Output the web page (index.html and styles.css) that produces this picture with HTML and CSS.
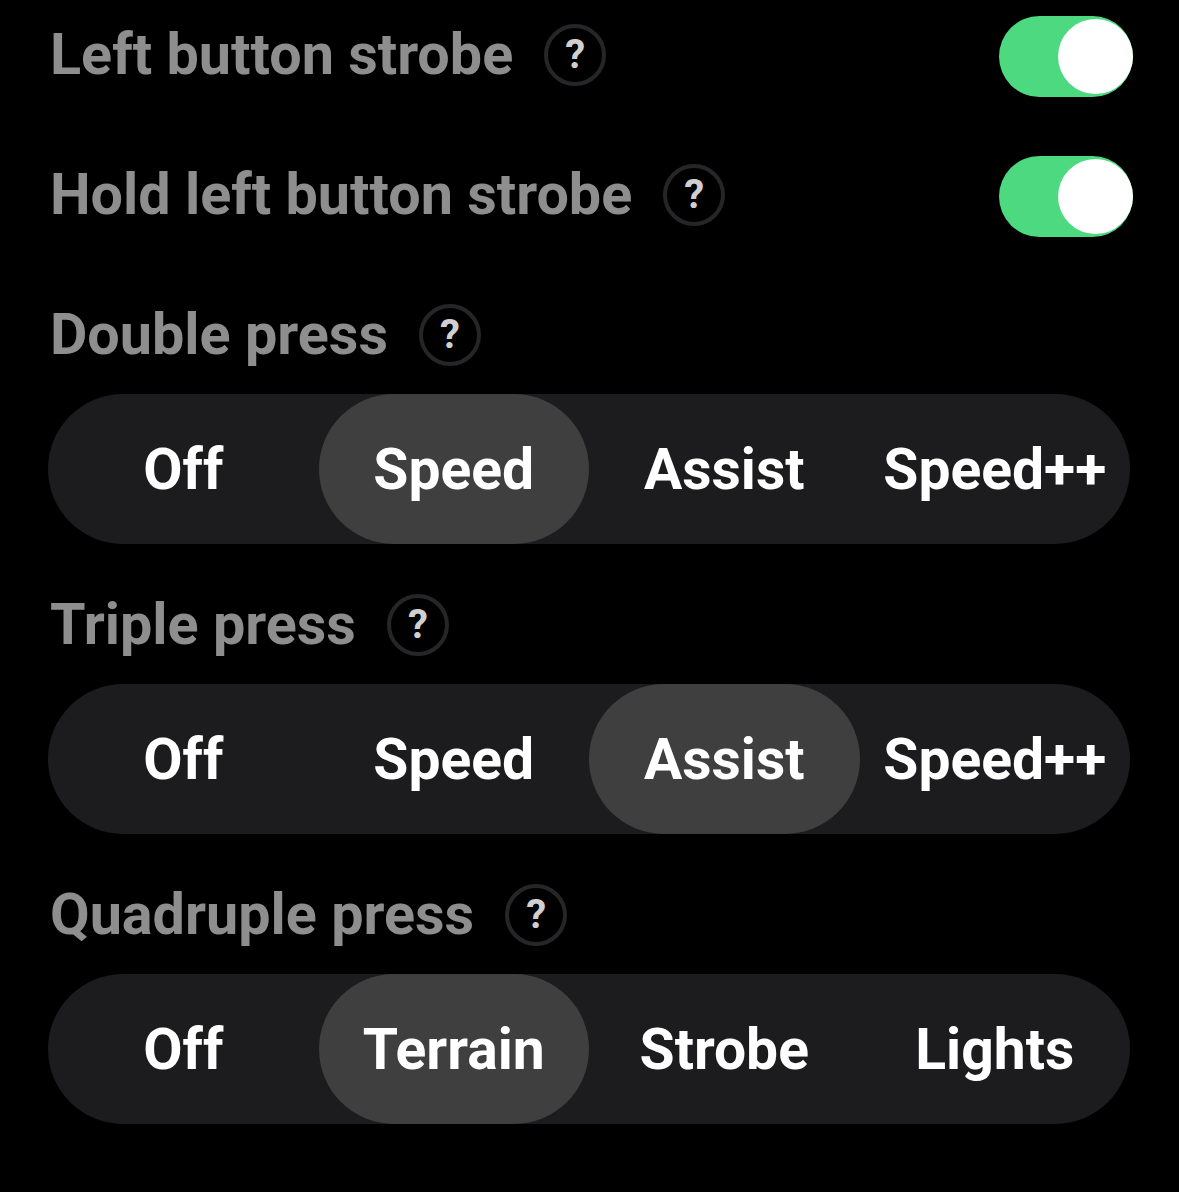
FILE: index.html
```html
<!DOCTYPE html>
<html lang="en">
<head>
    <meta charset="UTF-8">
    <meta name="viewport" content="width=device-width, initial-scale=1.0">
    <title>Button Settings</title>
    <link rel="stylesheet" href="styles.css">
</head>
<body>
    <div class="settings">
        <div class="row toggle-row">
            <div class="label">Left button strobe <span class="help">?</span></div>
            <div class="switch on"><span class="knob"></span></div>
        </div>
        <div class="row toggle-row">
            <div class="label">Hold left button strobe <span class="help">?</span></div>
            <div class="switch on"><span class="knob"></span></div>
        </div>

        <div class="row label-row">
            <div class="label">Double press <span class="help">?</span></div>
        </div>
        <div class="segmented">
            <div class="segment">Off</div>
            <div class="segment selected">Speed</div>
            <div class="segment">Assist</div>
            <div class="segment">Speed++</div>
        </div>

        <div class="row label-row">
            <div class="label">Triple press <span class="help">?</span></div>
        </div>
        <div class="segmented">
            <div class="segment">Off</div>
            <div class="segment">Speed</div>
            <div class="segment selected">Assist</div>
            <div class="segment">Speed++</div>
        </div>

        <div class="row label-row">
            <div class="label">Quadruple press <span class="help">?</span></div>
        </div>
        <div class="segmented">
            <div class="segment">Off</div>
            <div class="segment selected">Terrain</div>
            <div class="segment">Strobe</div>
            <div class="segment">Lights</div>
        </div>
    </div>
</body>
</html>
```

FILE: styles.css
```css
body {
    margin: 0;
    background: #000;
    font-family: Roboto, "Liberation Sans", sans-serif;
    font-weight: 700;
}
.settings {
    padding: 15px 46px 0 48px;
}
.row {
    display: flex;
    align-items: center;
    justify-content: space-between;
    height: 82px;
}
.toggle-row {
    margin-bottom: 58px;
}
.label-row {
    margin-bottom: 17px;
}
.label {
    display: flex;
    align-items: center;
    gap: 31px;
    padding: 0 0 3px 2px;
    color: #8e8e8e;
    font-size: 57.5px;
}
.help {
    display: flex;
    align-items: center;
    justify-content: center;
    width: 54px;
    height: 54px;
    border: 4px solid #262628;
    border-radius: 50%;
    color: #d0d0d0;
    font-size: 40px;
}
.switch {
    width: 134px;
    height: 81px;
    border-radius: 41px;
    background: #4cd980;
    display: flex;
    align-items: center;
    justify-content: flex-end;
    padding: 3px 0 3px 3px;
    box-sizing: border-box;
}
.knob {
    width: 75px;
    height: 75px;
    border-radius: 50%;
    background: #fff;
}
.segmented {
    display: grid;
    grid-template-columns: repeat(4, 1fr);
    height: 150px;
    margin-right: 3px;
    margin-bottom: 41px;
    border-radius: 75px;
    background: #1c1c1e;
}
.segment {
    display: flex;
    align-items: center;
    justify-content: center;
    border-radius: 75px;
    color: #fff;
    font-size: 57px;
}
.segment.selected {
    background: #3f3f3f;
}
```
